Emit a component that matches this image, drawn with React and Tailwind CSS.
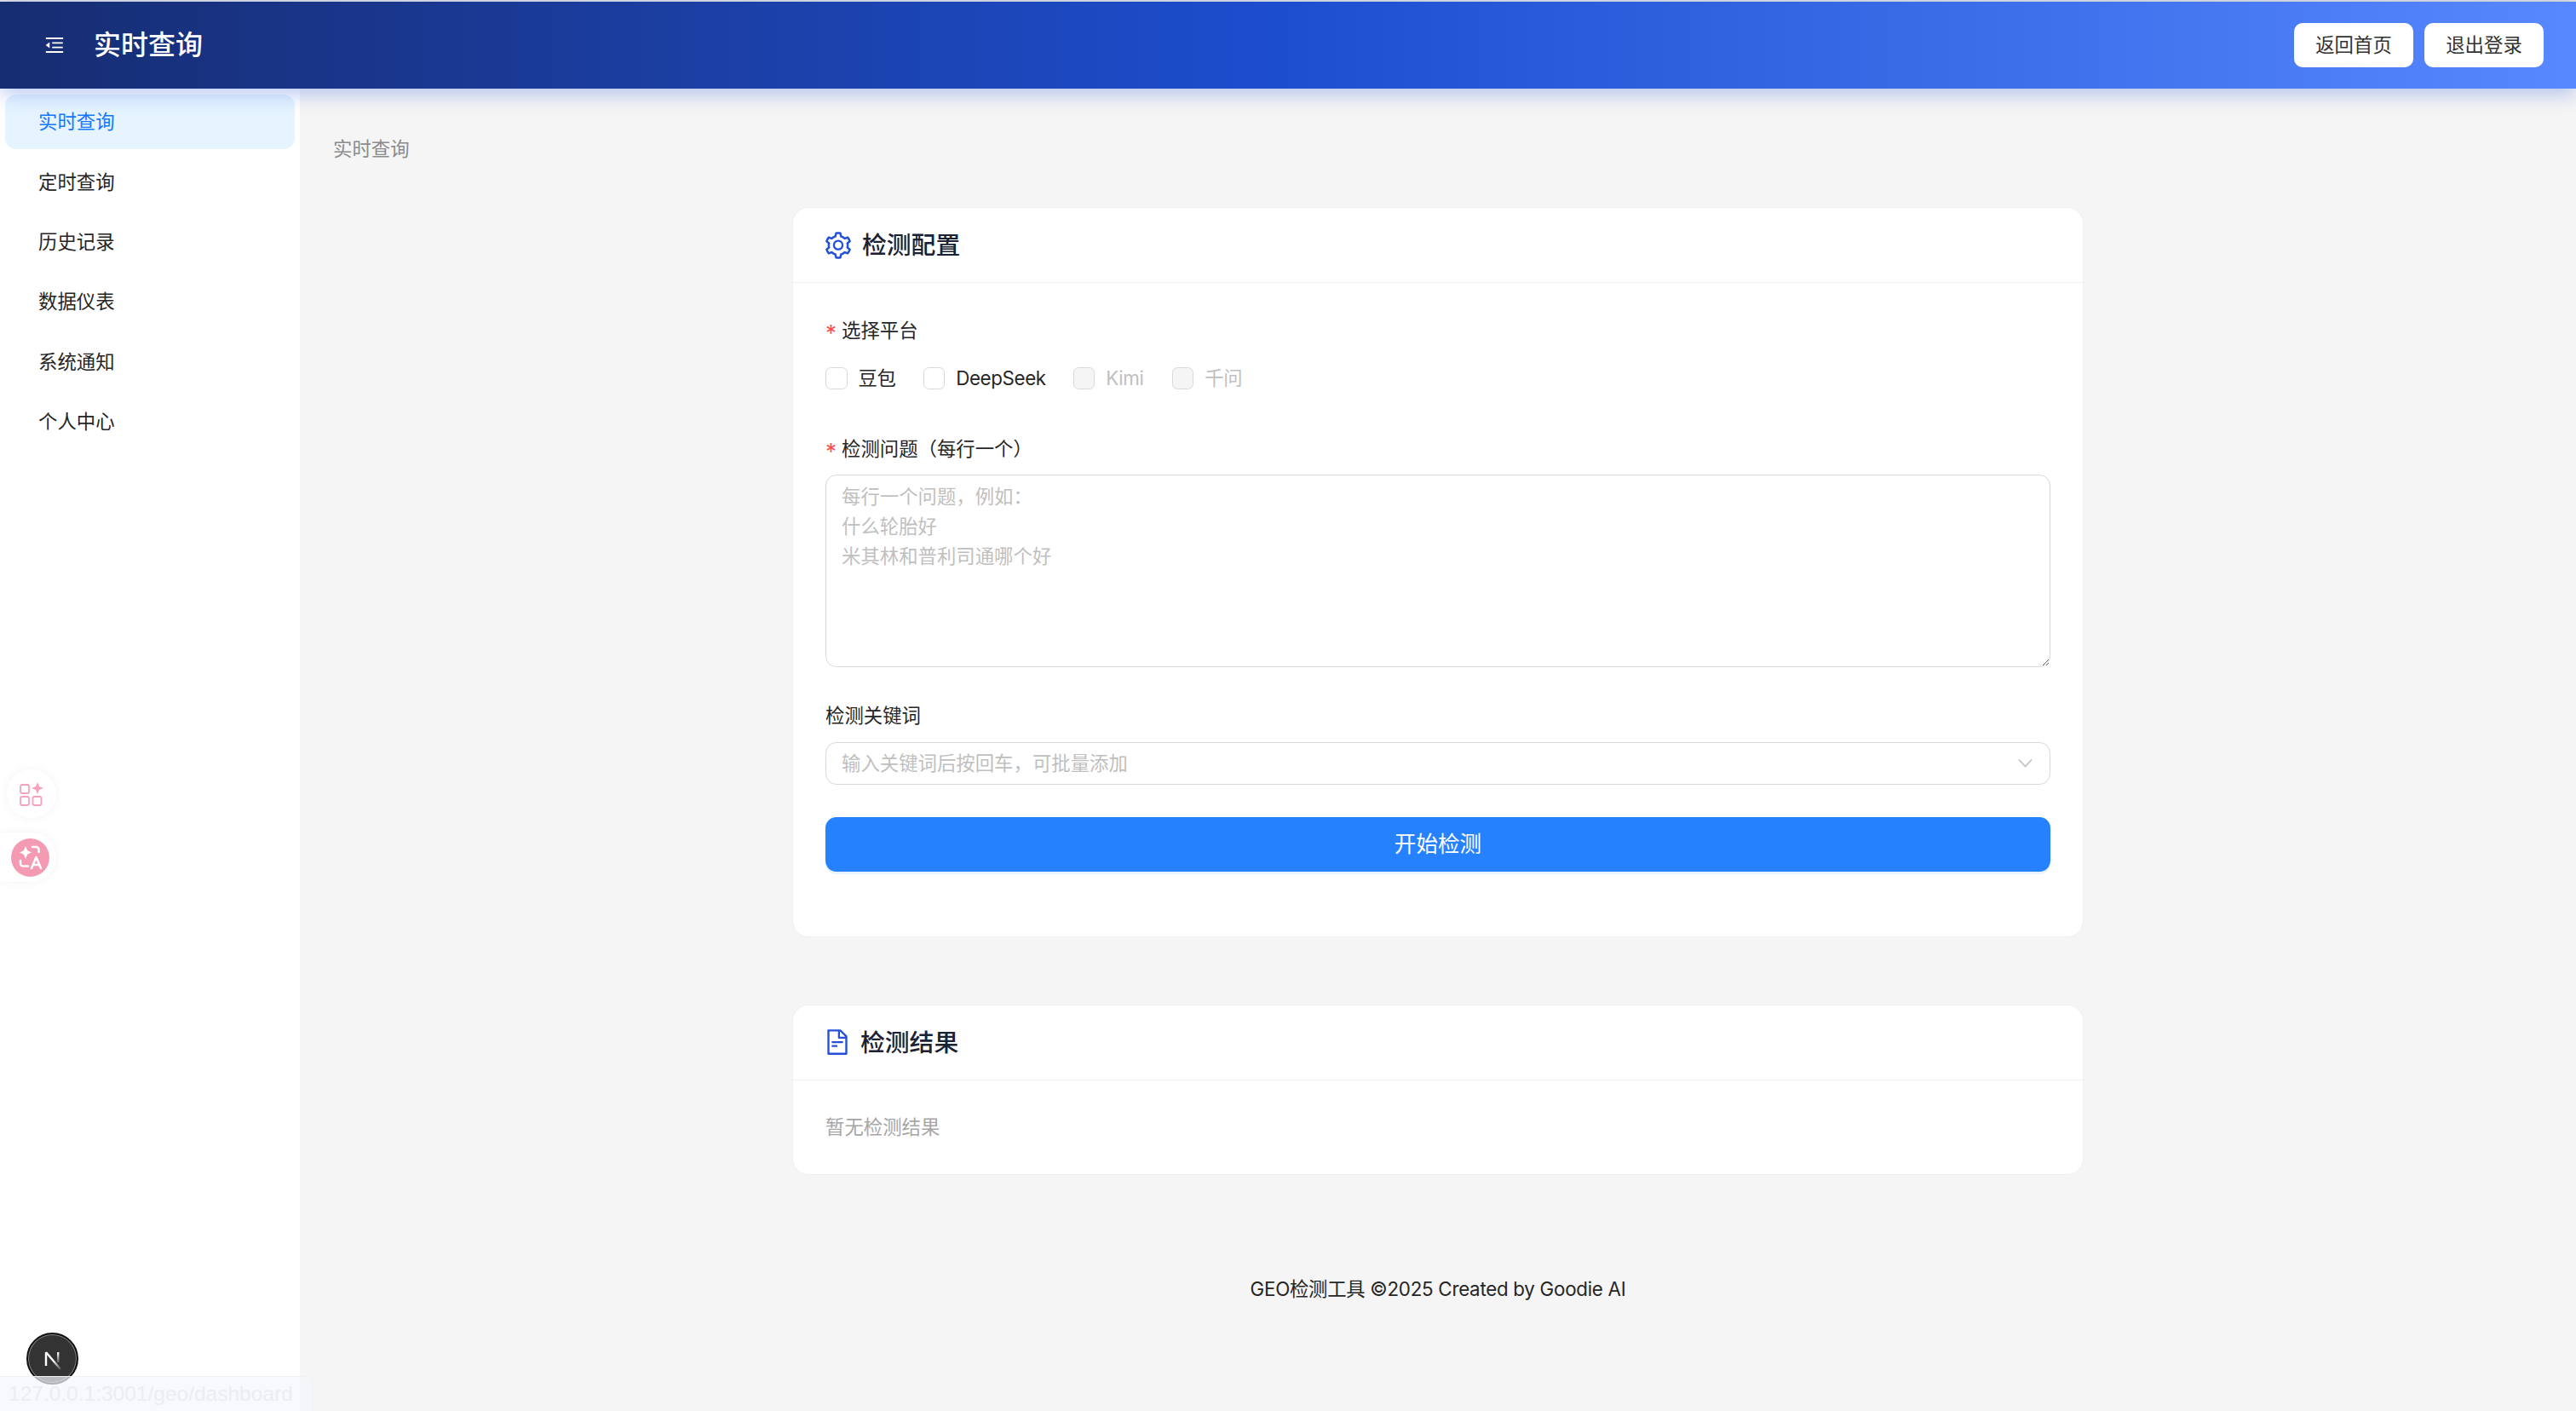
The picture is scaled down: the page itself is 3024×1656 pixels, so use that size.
import React from 'react'
import { AiOutlineMenuFold, AiOutlineSetting, AiOutlineFileText } from 'react-icons/ai'

const menuItems = ['实时查询', '定时查询', '历史记录', '数据仪表', '系统通知', '个人中心']

const platforms = [
  { name: '豆包', disabled: false, gap: 'mr-[32px]' },
  { name: 'DeepSeek', disabled: false, gap: 'mr-[32px]' },
  { name: 'Kimi', disabled: true, gap: 'mr-[33px]' },
  { name: '千问', disabled: true, gap: '' }
]

const Label = ({ required, children }) => (
  <div className="flex h-[34px] items-center text-[22.4px] text-[#262626]">
    {required && <span className="mr-[8px] w-[11px] pt-[6px] text-[26px] leading-none text-[#ff4d4f]">*</span>}
    <span>{children}</span>
  </div>
)

const Checkbox = ({ name, disabled, gap }) => (
  <label className={`flex items-center ${gap}`}>
    <span className={`h-[25.6px] w-[25.6px] rounded-[6.4px] border border-[#d9d9d9] ${disabled ? 'bg-[#f5f5f5]' : 'bg-white'}`} />
    <span className={`ml-[13px] text-[22.4px] leading-[25px] tracking-[-0.4px] ${disabled ? 'text-[#bfbfbf]' : 'text-[#262626]'}`}>{name}</span>
  </label>
)

const Card = ({ icon, title, className = '', children }) => (
  <section className={`rounded-[19.2px] border border-[#f0f0f0] bg-white ${className}`}>
    <div className="flex h-[88px] items-center border-b border-[#f0f0f0] pl-[35px]">
      {icon}
      <h2 className="ml-[10px] text-[28.8px] font-medium text-[#1a2233]">{title}</h2>
    </div>
    {children}
  </section>
)

const FloatingTools = () => (
  <div className="absolute left-0 top-[903px] z-20 flex flex-col gap-[17px]">
    <div className="ml-[8px] flex h-[57px] w-[58px] items-center justify-center rounded-full bg-white shadow-[0_0_12px_rgba(0,0,0,0.05)]">
      <svg width="28" height="28" viewBox="0 0 28 28" fill="none" stroke="#f5a3ba" strokeWidth="1.8">
        <rect x="1" y="3" width="10" height="10" rx="2" />
        <rect x="1" y="17" width="10" height="10" rx="2" />
        <rect x="15.5" y="17" width="10" height="10" rx="2" />
        <path d="M21 0l2 5 5 2-5 2-2 5-2-5-5-2 5-2z" fill="#f5a3ba" stroke="none" />
      </svg>
    </div>
    <div className="flex h-[58px] w-[66px] items-center justify-end rounded-r-full bg-white pr-[8px] shadow-[0_0_12px_rgba(0,0,0,0.05)]">
      <div className="flex h-[45px] w-[45px] items-center justify-center rounded-full bg-[#f49ab3]">
        <svg width="32" height="32" viewBox="0 0 32 32" fill="none" stroke="white" strokeWidth="2.6" strokeLinecap="round" strokeLinejoin="round">
          <path d="M10 3l2.2 5.3L17 10.5l-4.800 2.200L10 18l-2.200-5.300L3 10.500l4.800-2.200z" fill="white" stroke="none" />
          <path d="M18 4h4.500a3 3 0 0 1 3 3v3" />
          <path d="M4 20v3.500a3 3 0 0 0 3 3h6" />
          <path d="M17 29l5.500-13L28 29M19 25h7" />
        </svg>
      </div>
    </div>
  </div>
)

const NextBadge = () => (
  <div className="absolute left-[31px] top-[1564px] z-20 flex h-[61px] w-[61px] items-center justify-center rounded-full border-2 border-[#111] bg-[#333] shadow-[0_0_0_1px_#888_inset]">
    <svg width="28" height="28" viewBox="0 0 28 28" fill="none">
      <defs>
        <linearGradient id="nFade" x1="0" y1="0" x2="1" y2="1">
          <stop offset="0.5" stopColor="white" />
          <stop offset="1" stopColor="white" stopOpacity="0.15" />
        </linearGradient>
        <linearGradient id="nBar" x1="0" y1="0" x2="0" y2="1">
          <stop offset="0" stopColor="white" />
          <stop offset="1" stopColor="white" stopOpacity="0.2" />
        </linearGradient>
      </defs>
      <path d="M6 6v16" stroke="white" strokeWidth="2.4" />
      <path d="M6 6l17 20" stroke="url(#nFade)" strokeWidth="2.4" />
      <rect x="19" y="6" width="2.4" height="12" fill="url(#nBar)" />
    </svg>
  </div>
)

export default function App() {
  return (
    <div className="relative flex h-screen w-full flex-col overflow-hidden bg-[#f5f5f5] font-['Inter','Noto_Sans_CJK_SC',sans-serif]">
      <div className="h-[2px] bg-[#e8e6e3]" />
      <header className="relative z-10 flex h-[102px] items-center justify-between bg-linear-to-r from-[#172d72] via-[#1d4ed0] via-50% to-[#5788ff] pl-[51px] pr-[38px] shadow-[0_4px_24px_rgba(29,78,216,0.36)]">
        <div className="flex items-center">
          <AiOutlineMenuFold className="h-[26px] w-[26px] text-white" />
          <h1 className="ml-[33px] text-[32px] font-medium text-white">实时查询</h1>
        </div>
        <div className="flex items-center gap-[13px]">
          <button className="h-[52px] w-[140px] rounded-[10px] bg-white text-[22.4px] text-[#333]">返回首页</button>
          <button className="h-[52px] w-[140px] rounded-[10px] bg-white text-[22.4px] text-[#333]">退出登录</button>
        </div>
      </header>

      <div className="flex min-h-0 flex-1">
        <aside className="w-[352px] shrink-0 bg-white px-[6px] pt-[7px]">
          <nav className="flex flex-col gap-[6.4px]">
            {menuItems.map((item, i) => (
              <div
                key={item}
                className={`flex h-[64px] items-center rounded-[12.8px] pl-[39px] text-[22.4px] ${i === 0 ? 'bg-[#e6f4ff] text-[#1677ff]' : 'text-[#262626]'}`}
              >
                {item}
              </div>
            ))}
          </nav>
        </aside>

        <main className="min-w-0 flex-1 pt-[54px]">
          <div className="pl-[39px] text-[22.4px] leading-[34px] text-[#8c8c8c]">实时查询</div>

          <div className="mx-auto mt-[51px] w-[1516px]">
            <Card icon={<AiOutlineSetting className="h-[36px] w-[36px] text-[#2450d8]" />} title="检测配置">
              <div className="pb-[76px] pl-[38px] pr-[38px] pt-[39px]">
                <Label required>选择平台</Label>
                <div className="mt-[26px] flex">
                  {platforms.map(p => <Checkbox key={p.name} {...p} />)}
                </div>
                <div className="mt-[53px]">
                  <Label required>检测问题（每行一个）</Label>
                </div>
                <textarea
                  className="mt-[13px] block h-[226px] w-full rounded-[12.8px] border border-[#d9d9d9] bg-white px-[18px] py-[7px] text-[22.4px] leading-[35px] outline-none placeholder:text-[#bfbfbf]"
                  placeholder={'每行一个问题，例如：\n什么轮胎好\n米其林和普利司通哪个好'}
                />
                <div className="mt-[40px]">
                  <Label>检测关键词</Label>
                </div>
                <div className="mt-[14px] flex h-[50px] items-center justify-between rounded-[12.8px] border border-[#d9d9d9] bg-white pl-[18px] pr-[20px]">
                  <input
                    className="min-w-0 flex-1 bg-transparent text-[22.4px] outline-none placeholder:text-[#bfbfbf]"
                    placeholder="输入关键词后按回车，可批量添加"
                  />
                  <svg width="17" height="11" viewBox="0 0 17 11" fill="none" stroke="#bfbfbf" strokeWidth="1.6">
                    <path d="M1 1.500l7.500 8 7.500-8" />
                  </svg>
                </div>
                <button className="mt-[38px] h-[64px] w-full rounded-[12.8px] bg-[#2681ff] pt-[2px] text-[25.6px] text-white shadow-[0_3px_0_rgba(5,145,255,0.1)]">
                  开始检测
                </button>
              </div>
            </Card>

            <Card
              className="mt-[79px]"
              icon={<AiOutlineFileText className="h-[34px] w-[34px] text-[#2450d8]" />}
              title="检测结果"
            >
              <div className="pb-[38px] pl-[38px] pr-[38px] pt-[38px] text-[22.4px] leading-[34px] text-[#a6a6a6]">暂无检测结果</div>
            </Card>
          </div>

          <footer className="mt-[117px] text-center text-[22.4px] leading-[34px] tracking-[-0.3px] text-[#262626]">
            GEO检测工具 ©2025 Created by Goodie AI
          </footer>
        </main>
      </div>

      <FloatingTools />
      <NextBadge />
      <div className="absolute bottom-0 left-0 z-30 flex h-[41px] w-[367px] items-center rounded-tr-[8px] border-r border-t border-[#f0f1f5] bg-[#f4f6fc]/70 pl-[10px]">
        <span className="whitespace-nowrap font-['Liberation_Sans',sans-serif] text-[24.5px] text-[#ecedf0]">127.0.0.1:3001/geo/dashboard</span>
      </div>
    </div>
  )
}
